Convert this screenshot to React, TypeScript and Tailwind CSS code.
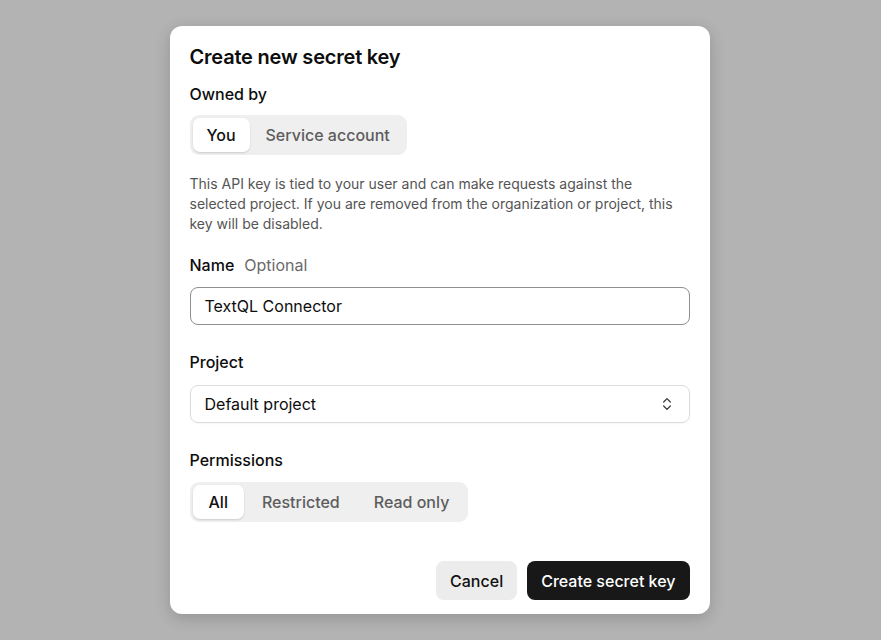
import { ChevronsUpDown } from "lucide-react";

function Segmented({
  options,
  active,
  pad,
}: {
  options: string[];
  active: number;
  pad: string;
}) {
  return (
    <div className="inline-flex h-[40px] items-center gap-[2px] rounded-[9px] bg-[#efefef] p-[3px]">
      {options.map((o, i) => (
        <div
          key={o}
          className={
            (i === active
              ? "flex h-full items-center rounded-[7px] bg-white font-medium text-[#111] shadow-[0_1px_2px_rgba(0,0,0,0.15)] "
              : "flex h-full items-center font-medium text-[#5d5d5d] ") + pad
          }
        >
          {o}
        </div>
      ))}
    </div>
  );
}

export default function App() {
  return (
    <div
      className="flex h-[640px] w-full items-start justify-center bg-[#b3b3b3] pt-[26px] pr-[2px] text-[16px] text-[#0d0d0d]"
      style={{ fontFamily: "Inter, 'Noto Sans', sans-serif" }}
    >
      <div className="flex h-[588px] w-[540px] flex-col rounded-[12px] bg-white px-[20px] pt-[16px] shadow-[0_4px_16px_rgba(0,0,0,0.18)]">
        <h1 className="text-[20px] leading-[30px] font-semibold tracking-[-0.2px]">
          Create new secret key
        </h1>

        <div className="mt-[11px] leading-[22px] font-medium">Owned by</div>
        <div className="mt-[10px]">
          <Segmented options={["You", "Service account"]} active={0} pad="px-[14px]" />
        </div>

        <p className="mt-[19px] text-[14px] leading-[20px] text-[#555]">
          This API key is tied to your user and can make requests against the
          selected project. If you are removed from the organization or
          project, this key will be disabled.
        </p>

        <div className="mt-[20px] flex gap-[10px] leading-[22px]">
          <span className="font-medium">Name</span>
          <span className="text-[#6b6b6b]">Optional</span>
        </div>
        <div className="mt-[11px] flex h-[38px] items-center rounded-[8px] border border-[#8f8f8f] px-[14px]">
          TextQL Connector
        </div>

        <div className="mt-[26px] leading-[22px] font-medium">Project</div>
        <div className="mt-[12px] flex h-[38px] items-center justify-between rounded-[8px] border border-[#dcdcdc] px-[14px] shadow-[0_1px_2px_rgba(0,0,0,0.04)]">
          <span>Default project</span>
          <ChevronsUpDown size={16} strokeWidth={1.8} className="text-[#333]" />
        </div>

        <div className="mt-[26px] leading-[22px] font-medium">Permissions</div>
        <div className="mt-[11px]">
          <Segmented
            options={["All", "Restricted", "Read only"]}
            active={0}
            pad="px-[16px]"
          />
        </div>

        <div className="mt-auto mb-[14px] flex justify-end gap-[10px]">
          <button className="h-[39px] rounded-[8px] bg-[#ececec] px-[14px] font-medium text-[#111]">
            Cancel
          </button>
          <button className="h-[39px] rounded-[8px] bg-[#181818] px-[14px] font-medium text-white">
            Create secret key
          </button>
        </div>
      </div>
    </div>
  );
}
